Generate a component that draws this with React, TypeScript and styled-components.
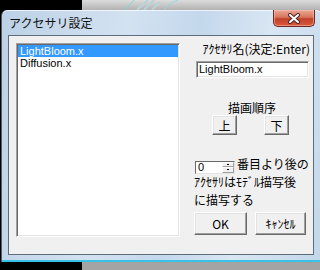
import styled, { createGlobalStyle } from 'styled-components'

const GlobalStyle = createGlobalStyle`
  html, body {
    margin: 0;
    padding: 0;
    background: #000;
  }
`

const UI_FONT = `"MS UI Gothic", "Noto Sans CJK JP", sans-serif`
const LATIN_FONT = `"Liberation Sans", "Noto Sans CJK JP", sans-serif`

const items = ['LightBloom.x', 'Diffusion.x']

const App: React.FC = () => {
  return (
    <Desktop>
      <GlobalStyle />
      <TopStrip>
        <svg width="238" height="10" viewBox="0 0 238 10">
          <path d="M43 10 L52 0" stroke="#7fd6e0" strokeWidth="1" fill="none" />
          <path d="M55 10 L66 0 M62 10 L72 0 M70 10 L78 2" stroke="#b9d3da" strokeWidth="2" fill="none" />
          <path d="M82 10 C86 5 90 2 96 0" stroke="#8fdbe6" strokeWidth="1" fill="none" />
        </svg>
      </TopStrip>
      <Window>
        <TitleBar>
          <Title>アクセサリ設定</Title>
          <CloseButton>
            <svg width="14" height="11" viewBox="0 0 14 11">
              <path d="M3 2 L11 9 M11 2 L3 9" stroke="#4a2a25" strokeWidth="4" strokeLinecap="round" />
              <path d="M3 2 L11 9 M11 2 L3 9" stroke="#ffffff" strokeWidth="2" strokeLinecap="round" />
            </svg>
          </CloseButton>
        </TitleBar>
        <Client>
          <ListBox>
            {items.map((name, i) => (
              <ListItem key={name} $selected={i === 0}>{name}</ListItem>
            ))}
          </ListBox>
          <Side>
            <NameLabel>ｱｸｾｻﾘ名(決定:Enter)</NameLabel>
            <TextBox>LightBloom.x</TextBox>
            <SectionLabel>描画順序</SectionLabel>
            <OrderRow>
              <SmallButton>上</SmallButton>
              <SmallButton>下</SmallButton>
            </OrderRow>
            <SpinRow>
              <SpinBox>
                <SpinValue>0</SpinValue>
                <SpinButtons>
                  <SpinArrow />
                  <SpinArrow />
                </SpinButtons>
              </SpinBox>
              <Caption>番目より後の</Caption>
            </SpinRow>
            <Caption>ｱｸｾｻﾘはﾓﾃﾞﾙ描写後</Caption>
            <Caption>に描写する</Caption>
            <ActionRow>
              <ActionButton $width={53}>OK</ActionButton>
              <ActionButton $width={51}>ｷｬﾝｾﾙ</ActionButton>
            </ActionRow>
          </Side>
        </Client>
      </Window>
      <BottomStrip />
    </Desktop>
  )
}

export default App

const Desktop = styled.div`
  width: 320px;
  height: 270px;
  overflow: hidden;
  display: flex;
  flex-direction: column;
  background: linear-gradient(to right, #000 0 82px, transparent 82px),
    linear-gradient(#d4d4d4, #a6a6a6 14px, #b4b4b4 250px, #9e9e9e);
`
const TopStrip = styled.div`
  height: 10px;
  padding-left: 82px;
  flex-shrink: 0;
  background: linear-gradient(#dcdcdc, #b2b2b2);
  box-shadow: inset 82px 0 0 #000;
  svg { display: block; }
`
const BottomStrip = styled.div`
  flex: 1;
  background: linear-gradient(to right, #000 0 82px, #a4a4a4 82px);
`
const Window = styled.div`
  margin-left: 1px;
  width: 321px;
  height: 252px;
  box-sizing: border-box;
  flex-shrink: 0;
  padding: 0 8px 7px 6px;
  display: flex;
  flex-direction: column;
  border-radius: 6px 6px 0 0;
  border-left: 1px solid #4f5f6f;
  background: linear-gradient(100deg, #bcd1e6 0%, #d3e2f1 35%, #c4d8ec 55%, #d9e6f3 75%, #c3d7ea 100%);
  box-shadow: inset 0 -2px 0 #37c2e6, inset 0 1px 0 rgba(255, 255, 255, 0.7);
`
const TitleBar = styled.div`
  height: 25px;
  display: flex;
  align-items: flex-start;
  justify-content: space-between;
`
const Title = styled.div`
  margin-top: 6px;
  margin-left: 1px;
  font-family: "Noto Sans CJK JP", sans-serif;
  font-size: 12px;
  line-height: 14px;
  color: #111;
`
const CloseButton = styled.div`
  width: 42px;
  height: 17px;
  box-sizing: border-box;
  margin-right: -1px;
  display: flex;
  align-items: center;
  justify-content: center;
  border: 1px solid #6b2a22;
  border-top: none;
  border-radius: 0 0 5px 5px;
  background: linear-gradient(#e9a795 0%, #d8765e 45%, #c2412a 55%, #d9583d 100%);
  box-shadow: inset 0 0 0 1px rgba(255, 200, 190, 0.5);
  svg { display: block; }
`
const Client = styled.div`
  flex: 1;
  display: flex;
  align-items: flex-start;
  padding: 7px 0 0 7px;
  border: 1px solid #5d6d7d;
  background: #f0f0f0;
  color: #000;
`
const ListBox = styled.div`
  width: 164px;
  height: 194px;
  box-sizing: border-box;
  padding: 1px 0 0;
  background: #fff;
  border-style: solid;
  border-width: 1px;
  border-color: #a0a0a0 #fff #fff #a0a0a0;
  box-shadow: inset 1px 1px 0 #696969, inset -1px -1px 0 #e3e3e3;
  padding-left: 1px;
  padding-right: 1px;
`
const ListItem = styled.div<{ $selected?: boolean }>`
  height: 12px;
  padding-left: 2px;
  font-family: ${LATIN_FONT};
  font-size: 11px;
  line-height: 12px;
  color: ${(p) => (p.$selected ? '#fff' : '#000')};
  background: ${(p) => (p.$selected ? '#3399ff' : 'transparent')};
`
const Side = styled.div`
  margin-left: 14px;
  width: 116px;
  display: flex;
  flex-direction: column;
  font-family: ${UI_FONT};
  font-size: 12px;
`
const NameLabel = styled.div`
  height: 12px;
  line-height: 12px;
  text-align: right;
  white-space: nowrap;
`
const TextBox = styled.div`
  margin: 6px 0 0 2px;
  width: 113px;
  height: 17px;
  box-sizing: border-box;
  padding-left: 2px;
  background: #fff;
  border-style: solid;
  border-width: 1px;
  border-color: #a0a0a0 #fff #fff #a0a0a0;
  box-shadow: inset 1px 1px 0 #696969, inset -1px -1px 0 #e3e3e3;
  font-family: ${LATIN_FONT};
  font-size: 11px;
  line-height: 15px;
`
const SectionLabel = styled.div`
  margin-top: 24px;
  height: 12px;
  line-height: 12px;
  text-align: center;
`
const OrderRow = styled.div`
  margin: 1px 0 0 18px;
  display: flex;
  gap: 27px;
`
const raised = `
  box-sizing: border-box;
  background: #f0f0f0;
  border-style: solid;
  border-width: 1px;
  border-color: #fff #696969 #696969 #fff;
  box-shadow: inset -1px -1px 0 #a0a0a0, inset 1px 1px 0 #e3e3e3;
  display: flex;
  align-items: center;
  justify-content: center;
`
const SmallButton = styled.div`
  ${raised}
  width: 25px;
  height: 20px;
  font-size: 12px;
`
const SpinRow = styled.div`
  margin-top: 23px;
  display: flex;
  align-items: center;
  gap: 2px;
`
const SpinBox = styled.div`
  margin-left: 1px;
  width: 40px;
  height: 13px;
  box-sizing: border-box;
  display: flex;
  background: #fff;
  border-style: solid;
  border-width: 1px;
  border-color: #696969 #e3e3e3 #e3e3e3 #696969;
`
const SpinValue = styled.div`
  flex: 1;
  padding-left: 2px;
  font-family: ${LATIN_FONT};
  font-size: 11px;
  line-height: 11px;
`
const SpinButtons = styled.div`
  width: 12px;
  display: flex;
  flex-direction: column;
`
const SpinArrow = styled.div`
  flex: 1;
  box-sizing: border-box;
  background: #f0f0f0;
  border-style: solid;
  border-width: 1px;
  border-color: #fff #a0a0a0 #a0a0a0 #fff;
  position: relative;
  &::after {
    content: '';
    position: absolute;
    left: 4px;
    top: 1px;
    width: 2px;
    height: 1px;
    background: #000;
  }
`
const Caption = styled.div`
  height: 18px;
  line-height: 12px;
  white-space: nowrap;
`
const ActionRow = styled.div`
  margin-top: 0px;
  display: flex;
  gap: 8px;
`
const ActionButton = styled.div<{ $width: number }>`
  ${raised}
  width: ${(p) => p.$width}px;
  height: 23px;
  font-size: 12px;
`
